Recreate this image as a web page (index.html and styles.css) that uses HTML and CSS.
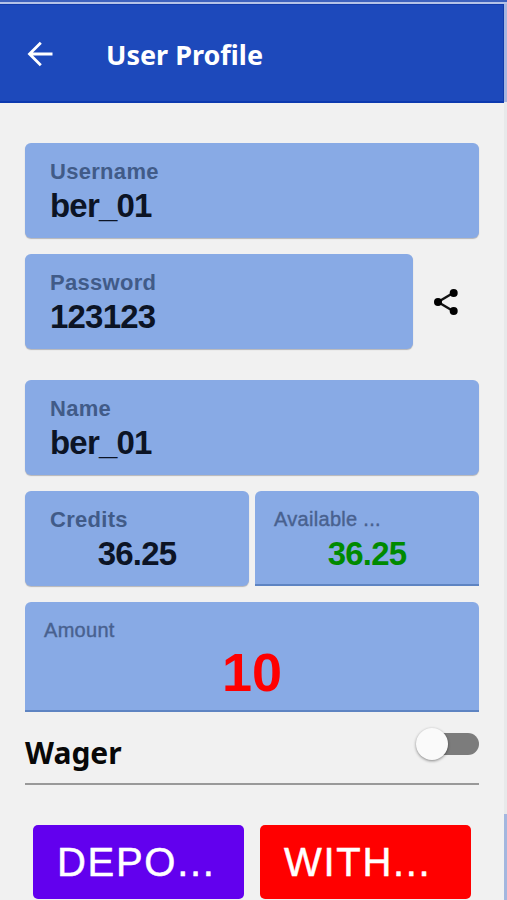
FILE: index.html
```html
<!DOCTYPE html>
<html lang="en">
<head>
    <meta charset="UTF-8">
    <meta name="viewport" content="width=device-width, initial-scale=1.0">
    <title>User Profile</title>
    <link rel="stylesheet" href="styles.css">
</head>
<body>
    <div class="topline"></div>
    <div class="screen">
        <div class="page">
            <header class="toolbar">
                <svg class="back" viewBox="0 0 26 26" width="26" height="26">
                    <path d="M25.5 13H2.5M13.8 1.7L2.5 13l11.3 11.3" fill="none" stroke="#fff" stroke-width="2.8"/>
                </svg>
                <h1>User Profile</h1>
            </header>
            <main class="content">
                <div class="field">
                    <span class="label">Username</span>
                    <span class="value">ber_01</span>
                </div>
                <div class="row password-row">
                    <div class="field">
                        <span class="label">Password</span>
                        <span class="value">123123</span>
                    </div>
                    <svg class="share" viewBox="0 0 26 28" width="26" height="28">
                        <path d="M20.5 4.8L5 14l15.5 9.2" fill="none" stroke="#111" stroke-width="2.4"/>
                        <circle cx="5" cy="14" r="4" />
                        <circle cx="20.7" cy="4.9" r="4" />
                        <circle cx="20.7" cy="23.1" r="4" />
                    </svg>
                </div>
                <div class="field">
                    <span class="label">Name</span>
                    <span class="value">ber_01</span>
                </div>
                <div class="row credits-row">
                    <div class="field">
                        <span class="label">Credits</span>
                        <span class="value center">36.25</span>
                    </div>
                    <div class="field input">
                        <span class="label">Available ...</span>
                        <span class="value center green">36.25</span>
                    </div>
                </div>
                <div class="field input amount">
                    <span class="label">Amount</span>
                    <span class="value center red">10</span>
                </div>
                <div class="wager">
                    <h2>Wager</h2>
                    <div class="switch"><div class="knob"></div></div>
                </div>
                <div class="buttons">
                    <button class="deposit">DEPO...</button>
                    <button class="withdraw">WITH...</button>
                </div>
            </main>
        </div>
        <div class="edge">
            <div class="edge-top"></div>
            <div class="edge-middle"></div>
            <div class="edge-bottom"></div>
        </div>
    </div>
</body>
</html>
```

FILE: styles.css
```css
* {
    box-sizing: border-box;
}

body {
    margin: 0;
    height: 900px;
    overflow: hidden;
    background-color: #f1f1f1;
    font-family: "Liberation Sans", Arial, sans-serif;
}

.topline {
    height: 4px;
    background: #3d61bd;
    border-bottom: 2px solid #b4c3e8;
}

.screen {
    display: grid;
    grid-template-columns: 504px 3px;
    height: 896px;
}

.toolbar {
    display: flex;
    align-items: center;
    height: 99px;
    padding-left: 27px;
    background: #1d49bb;
    border-top: 1px solid #123baa;
    border-bottom: 2px solid #0c39af;
    border-right: 1px solid #123baa;
    color: #fff;
}

.back {
    margin-bottom: -1px;
}

h1 {
    margin: 0 0 0 53px;
    padding-top: 3px;
    font-family: "Noto Sans", "Open Sans", sans-serif;
    font-size: 27px;
    line-height: 36px;
    font-weight: 700;
}

.content {
    display: flex;
    flex-direction: column;
    padding: 40px 25px 0;
}

.field {
    display: flex;
    flex-direction: column;
    height: 95px;
    margin-bottom: 16px;
    padding: 16px 25px 0;
    background: #88aae5;
    border-radius: 6px;
    box-shadow: 0 1px 1px #b5b5b8;
}

.label {
    font-size: 22px;
    line-height: 25px;
    font-weight: 700;
    letter-spacing: 0.3px;
    color: #415b88;
}

.value {
    margin-top: 2px;
    font-size: 33px;
    line-height: 40px;
    font-weight: 700;
    letter-spacing: -0.8px;
    color: #0c1425;
}

.center {
    text-align: center;
}

.green {
    color: #008a00;
}

.row {
    display: flex;
}

.password-row {
    align-items: center;
    margin-bottom: 15px;
}

.password-row .field {
    width: 388px;
}

.share {
    margin-left: 20px;
    margin-bottom: 16px;
}

.credits-row {
    display: grid;
    grid-template-columns: 1fr 1fr;
    gap: 6px;
}

.input {
    padding: 16px 19px 0;
    border-bottom: 2px solid #5e84c2;
    border-radius: 6px 6px 0 0;
    box-shadow: none;
}

.input .label {
    font-size: 20px;
    font-weight: 400;
    letter-spacing: 0.3px;
    color: #48618f;
    -webkit-text-stroke: 0.4px #48618f;
}

.amount {
    height: 110px;
    margin-bottom: 0;
}

.red {
    margin-top: 0;
    color: #ff0000;
    font-size: 54px;
    line-height: 58px;
    letter-spacing: 0;
}

.wager {
    display: flex;
    justify-content: space-between;
    height: 73px;
    padding-top: 16px;
    border-bottom: 2px solid #999;
}

h2 {
    margin: 0;
    padding-top: 4px;
    font-family: "Noto Sans", "Open Sans", sans-serif;
    font-size: 30px;
    line-height: 42px;
    font-weight: 700;
    color: #080808;
}

.switch {
    display: flex;
    align-items: center;
    width: 58px;
    height: 22px;
    margin-top: 5px;
    background: #7c7c7c;
    border-radius: 11px;
}

.knob {
    width: 32px;
    height: 32px;
    margin-left: -5px;
    flex-shrink: 0;
    background: #fafafa;
    border-radius: 50%;
    box-shadow: 0 1px 3px rgba(0, 0, 0, 0.45);
}

.buttons {
    display: flex;
    gap: 16px;
    padding: 40px 8px 0;
}

button {
    width: 211px;
    height: 74px;
    padding: 0 0 0 24px;
    border: none;
    border-radius: 5px;
    color: white;
    font-family: "Liberation Sans", Arial, sans-serif;
    font-size: 40px;
    line-height: 74px;
    text-align: left;
    letter-spacing: 1.7px;
    white-space: nowrap;
    -webkit-text-stroke: 0.5px white;
}

.deposit {
    background: #6200ee;
}

.withdraw {
    background: #ff0000;
}

.edge {
    display: flex;
    flex-direction: column;
}

.edge-top {
    height: 98px;
    background: #a7b6df;
}

.edge-middle {
    height: 712px;
    background: #e8e9ea;
}

.edge-bottom {
    flex: 1;
    background: #a3b7df;
}
```
